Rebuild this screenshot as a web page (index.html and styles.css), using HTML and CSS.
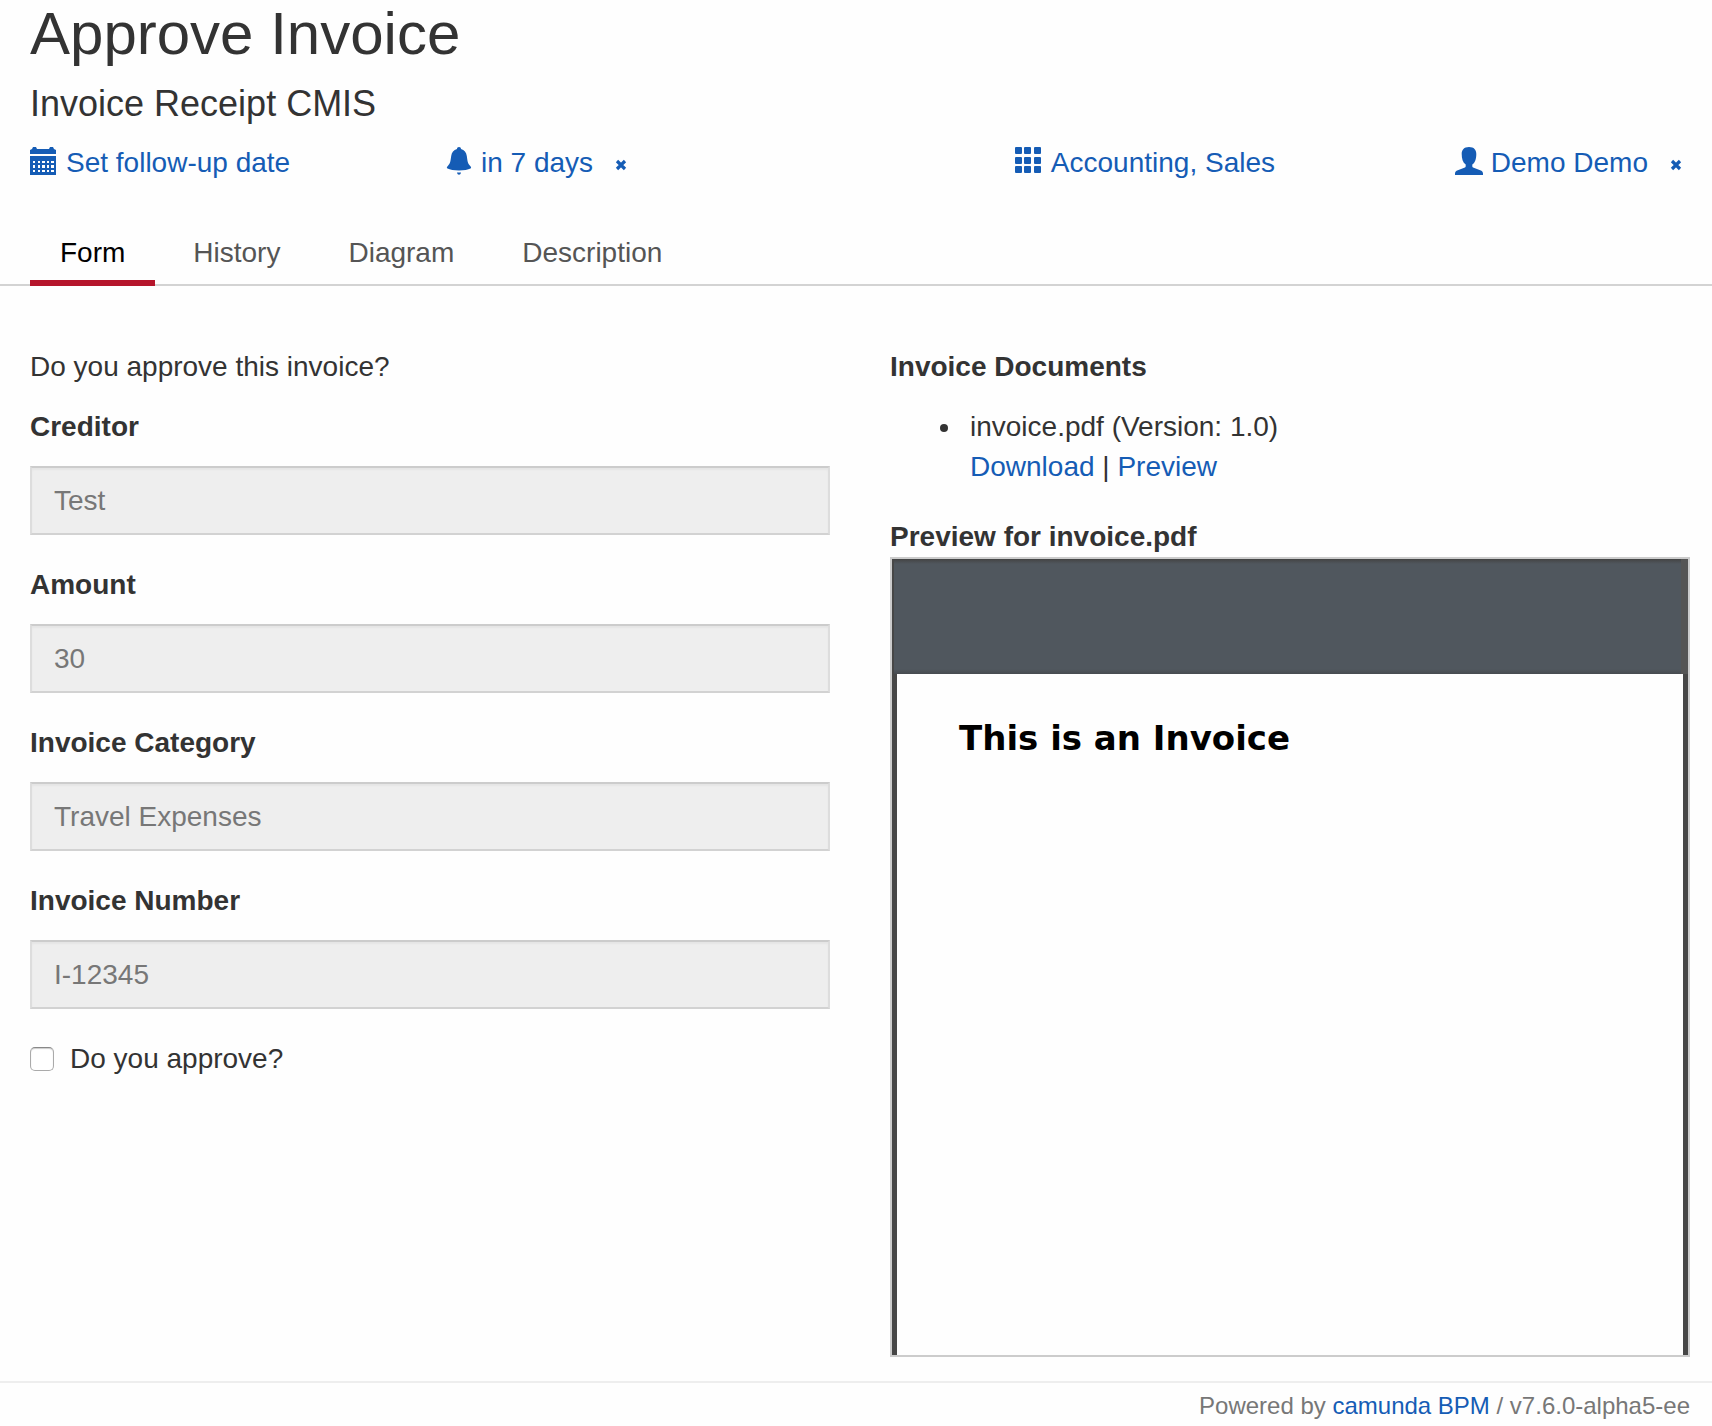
FILE: index.html
```html
<!DOCTYPE html>
<html lang="en">
<head>
<meta charset="utf-8">
<title>Approve Invoice</title>
<link rel="stylesheet" href="styles.css">
</head>
<body>
<header class="task-header">
  <h1 class="task-name">Approve Invoice</h1>
  <h2 class="process-name">Invoice Receipt CMIS</h2>
  <div class="task-meta">
    <div class="meta-item">
      <button type="button" class="meta-button">
        <svg class="icon" viewBox="0 0 28 28" aria-hidden="true"><path fill="currentColor" fill-rule="evenodd" d="M0 3l2-1 1-2h3l1 2h12l1-2h3l1 2 2 1v4H0zM0 9h26v19H0zM3 14v2h2v-2zm5 0v2h2v-2zm4 0v2h3v-2zm5 0v2h2v-2zm4 0v2h3v-2zM3 18v3h2v-3zm5 0v3h2v-3zm4 0v3h3v-3zm5 0v3h2v-3zm4 0v3h3v-3zM3 23v2h2v-2zm5 0v2h2v-2zm4 0v2h3v-2zm5 0v2h2v-2zm4 0v2h3v-2z"/></svg>
        Set follow-up date</button>
    </div>
    <div class="meta-item">
      <button type="button" class="meta-button">
        <svg class="icon" viewBox="0 0 28 28" aria-hidden="true"><path fill="currentColor" d="M14 0c1.300 0 2 .8 2 2 3.400.9 5.300 3.400 5.800 7 .7 5 .9 7.500 3.200 9.700 1.500 1.500 1.400 2.300.5 2.800-2.500 1.300-6.500 2-11.500 2s-9-.7-11.500-2c-.9-.5-1-1.300.5-2.800C5.300 16.500 5.500 14 6.200 9c.5-3.600 2.400-6.100 5.800-7 0-1.200.7-2 2-2zM12 25.500h4c-.3 1.500-1 2.200-2 2.200s-1.700-.7-2-2.200z"/></svg>
        in 7 days</button>
      <button type="button" class="remove-button" aria-label="Remove due date"><svg class="remove-icon" viewBox="0 0 12 12" aria-hidden="true"><path d="M2 2l8 8m0-8l-8 8" stroke="currentColor" stroke-width="3.200"/></svg></button>
    </div>
    <div class="meta-item meta-item-end">
      <button type="button" class="meta-button">
        <svg class="icon" viewBox="0 0 28 28" aria-hidden="true"><g fill="currentColor"><rect width="7" height="7" rx="1"/><rect x="9" width="7" height="7" rx="1"/><rect x="19" width="7" height="7" rx="1"/><rect y="10" width="7" height="7" rx="1"/><rect x="9" y="10" width="7" height="7" rx="1"/><rect x="19" y="10" width="7" height="7" rx="1"/><rect y="19" width="7" height="7" rx="1"/><rect x="9" y="19" width="7" height="7" rx="1"/><rect x="19" y="19" width="7" height="7" rx="1"/></g></svg>
        Accounting, Sales</button>
    </div>
    <div class="meta-item meta-item-end">
      <button type="button" class="meta-button">
        <svg class="icon" viewBox="0 0 28 28" aria-hidden="true"><path fill="currentColor" d="M14 0c5 0 7.300 2.800 7.300 7 0 4.500-1 8.500-4 10.500v1.700c0 .8.600 1.300 1.400 1.600l6.500 2.400c1.800.7 2.800 1.600 2.800 3.300V28H0v-1.500c0-1.700 1-2.600 2.800-3.300l6.500-2.400c.8-.3 1.400-.8 1.400-1.600v-1.700c-3-2-4-6-4-10.500 0-4.200 2.300-7 7.300-7z"/></svg>
        Demo Demo</button>
      <button type="button" class="remove-button" aria-label="Remove assignee"><svg class="remove-icon" viewBox="0 0 12 12" aria-hidden="true"><path d="M2 2l8 8m0-8l-8 8" stroke="currentColor" stroke-width="3.200"/></svg></button>
    </div>
  </div>
</header>
<nav class="tabs">
  <a class="tab tab-active" href="#form">Form</a>
  <a class="tab" href="#history">History</a>
  <a class="tab" href="#diagram">Diagram</a>
  <a class="tab" href="#description">Description</a>
</nav>
<main class="task-body" id="form">
  <form class="invoice-form">
    <p class="intro">Do you approve this invoice?</p>
    <div class="field">
      <label class="field-label" for="creditor">Creditor</label>
      <input class="field-input" id="creditor" type="text" value="Test" readonly>
    </div>
    <div class="field">
      <label class="field-label" for="amount">Amount</label>
      <input class="field-input" id="amount" type="text" value="30" readonly>
    </div>
    <div class="field">
      <label class="field-label" for="category">Invoice Category</label>
      <input class="field-input" id="category" type="text" value="Travel Expenses" readonly>
    </div>
    <div class="field">
      <label class="field-label" for="number">Invoice Number</label>
      <input class="field-input" id="number" type="text" value="I-12345" readonly>
    </div>
    <label class="check"><input class="check-box" type="checkbox"> Do you approve?</label>
  </form>
  <section class="documents">
    <h3 class="section-title">Invoice Documents</h3>
    <ul class="document-list">
      <li class="document">invoice.pdf (Version: 1.0)<br><a href="#download">Download</a> | <a href="#preview">Preview</a></li>
    </ul>
    <h3 class="section-title">Preview for invoice.pdf</h3>
    <div class="preview" id="preview">
      <div class="preview-toolbar"></div>
      <article class="preview-page">
        <h4 class="preview-heading">This is an Invoice</h4>
      </article>
    </div>
  </section>
</main>
<footer class="footer">Powered by <a href="#camunda">camunda BPM</a> / v7.6.0-alpha5-ee</footer>
</body>
</html>
```
FILE: styles.css
```css
*, *::before, *::after { box-sizing: border-box; }

body {
  margin: 0;
  min-height: 100vh;
  display: flex;
  flex-direction: column;
  background: #fefefe;
  color: #333;
  font: 28px/40px "Liberation Sans", Arial, sans-serif;
}

h1, h2, h3, h4, p, ul { margin: 0; }

a { color: #155cb5; text-decoration: none; }

button {
  padding: 0;
  border: 0;
  background: none;
  color: #155cb5;
  font: inherit;
  cursor: pointer;
}

.task-header { padding: 0 22px 0 30px; }

.task-name { font-size: 60px; line-height: 68px; font-weight: 400; }

.process-name { margin-top: 16px; font-size: 36px; line-height: 40px; font-weight: 400; }

.task-meta {
  display: grid;
  grid-template-columns: repeat(4, 1fr);
  margin-top: 19px;
}

.meta-item { display: flex; align-items: center; gap: 22px; }

.meta-item-end { justify-content: flex-end; }

.meta-button { display: flex; align-items: center; gap: 8px; white-space: nowrap; }

.icon { width: 28px; height: 28px; margin-bottom: 5px; }

.remove-button { display: flex; padding: 4px 8px 0 0; }

.remove-icon { width: 12px; height: 12px; }

.tabs {
  display: flex;
  gap: 8px;
  margin-top: 50px;
  padding-left: 30px;
  box-shadow: inset 0 -2px #d3d3d3;
}

.tab {
  padding: 0 30px 7px;
  border-bottom: 6px solid transparent;
  color: #555;
}

.tab-active { border-bottom-color: #b5152b; color: #000; }

.task-body {
  display: grid;
  grid-template-columns: 1fr 1fr;
  gap: 60px;
  padding: 61px 22px 24px 30px;
}

.intro { margin-bottom: 20px; }

.field { margin-bottom: 30px; }

.field-label { display: block; margin-bottom: 19px; font-weight: 700; }

.field-input {
  display: block;
  width: 100%;
  height: 69px;
  padding: 1px 22px 0;
  border: 2px solid #ddd;
  border-top-color: #ccc;
  border-bottom-color: #d2d2d2;
  border-radius: 0;
  background: #eee;
  box-shadow: inset 0 2px 2px rgba(0, 0, 0, 0.04);
  color: #777;
  font: inherit;
}

.check { display: flex; align-items: center; gap: 16px; }

.check-box {
  appearance: none;
  width: 24px;
  height: 24px;
  margin: 0;
  border: 1px solid #aaa;
  border-top-color: #888;
  border-radius: 5px;
  background: #fff;
  box-shadow: inset 0 1px 1px #ccc;
}

.section-title { font-size: 28px; line-height: 40px; font-weight: 700; }

.document-list { margin: 20px 0 30px; padding-left: 73px; }

.document { padding-left: 7px; }

.preview {
  display: flex;
  flex-direction: column;
  aspect-ratio: 1;
  border: 2px solid #ccc;
  background: #474747;
}

.preview-toolbar {
  height: 115px;
  border-left: 2px solid #474747;
  border-right: 7px solid #555;
  background: linear-gradient(#444, #50575e 5px, #50575e 110px, #474b50);
}

.preview-page { flex: 1; margin: 0 5px; padding: 44px 62px; background: #fefefe; }

.preview-heading {
  color: #000;
  font: 700 34px/40px "DejaVu Sans", sans-serif;
}

.footer {
  margin-top: auto;
  padding: 3px 22px 0 30px;
  border-top: 2px solid #eee;
  color: #777;
  font-size: 24px;
  text-align: right;
}
```
